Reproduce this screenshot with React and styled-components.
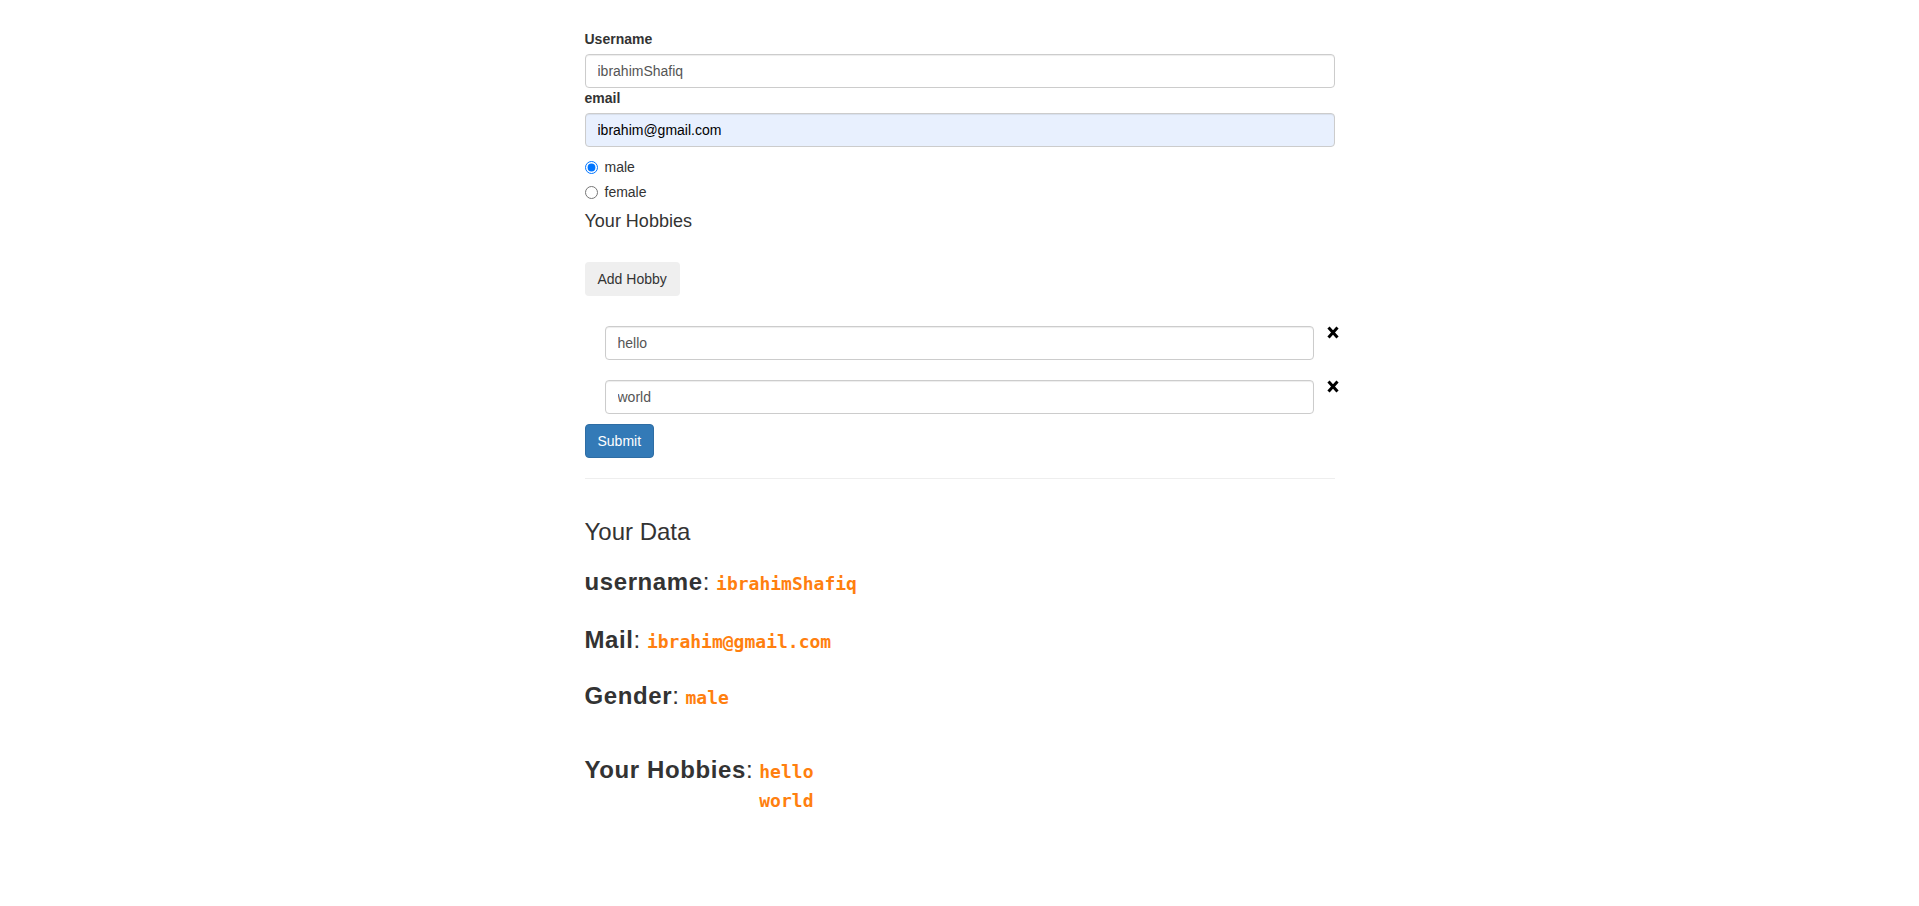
import React, { useState } from 'react';
import styled, { createGlobalStyle } from 'styled-components';

const textColor = '#333';
const borderColor = '#ccc';
const codeColor = '#ff7f0f';

const GlobalStyle = createGlobalStyle`
  * { box-sizing: border-box; }
  body {
    margin: 0;
    background: #fff;
    font-family: "Liberation Sans", Arial, Helvetica, sans-serif;
    font-size: 14px;
    line-height: 1.42857;
    color: ${textColor};
  }
`

const Page = styled.div`
  width: 1170px;
  margin: 0 auto;
  padding: 29px 0 40px;
`

const Column = styled.div`
  width: 750px;
  margin: 0 auto;
`

const Label = styled.label`
  display: block;
  font-weight: 700;
  line-height: 20px;
  margin-bottom: 5px;
`

const Input = styled.input`
  display: block;
  width: 100%;
  min-width: 0;
  height: 34px;
  padding: 6px 12px;
  font-family: inherit;
  font-size: 14px;
  line-height: 20px;
  color: ${props => (props.$autofill ? '#000' : '#555')};
  background: ${props => (props.$autofill ? '#e8f0fe' : '#fff')};
  border: 1px solid ${borderColor};
  border-radius: 4px;
  box-shadow: inset 0 1px 1px rgba(0, 0, 0, 0.075);
  outline: none;
`

const RadioLabel = styled.label`
  display: flex;
  align-items: center;
  line-height: 20px;
  margin: 10px 0;

  & + & { margin-top: -5px; }

  input {
    width: 13px;
    height: 13px;
    margin: 0 7px 0 0;
  }
`

const SubTitle = styled.h4`
  font-size: 18px;
  font-weight: 400;
  line-height: 1.1;
  margin: 10px 0 30px;
`

const Button = styled.button`
  display: inline-block;
  padding: 6px 12px;
  font-family: inherit;
  font-size: 14px;
  line-height: 20px;
  border: 1px solid ${props => (props.$primary ? '#2e6da4' : 'transparent')};
  border-radius: 4px;
  background: ${props => (props.$primary ? '#337ab7' : '#efefef')};
  color: ${props => (props.$primary ? '#fff' : textColor)};
  cursor: pointer;
`

const HobbyList = styled.div`
  display: flex;
  flex-direction: column;
  gap: 20px;
  margin: 30px 0 10px;
`

const HobbyRow = styled.div`
  display: flex;
  align-items: flex-start;
  padding-left: 20px;
`

const RemoveIcon = styled.span`
  flex: 0 0 21px;
  width: 21px;
  min-width: 0;
  padding-left: 13px;
  cursor: pointer;

  svg { display: block; overflow: visible; }
`

const Divider = styled.hr`
  margin: 20px 0;
  border: 0;
  border-top: 1px solid #eee;
`

const DataTitle = styled.h3`
  font-size: 24px;
  font-weight: 400;
  line-height: 26.4px;
  margin: 40px 0 0;
`

const DataRow = styled.h3`
  font-size: 24px;
  font-weight: 400;
  line-height: 26.4px;
  margin: ${props => props.$gap}px 0 0;

  b {
    font-weight: 700;
    letter-spacing: 0.6px;
  }
`

const Code = styled.code`
  font-family: "DejaVu Sans Mono", "Liberation Mono", monospace;
  font-size: 18px;
  font-weight: 700;
  color: ${codeColor};
`

const CodeStack = styled.span`
  display: inline-flex;
  flex-direction: column;
  vertical-align: baseline;

  code { line-height: 29px; }
`

function Cross() {
  return (
    <svg width="12" height="13" viewBox="0 0 12 13">
      <path d="M1.5 1.5 L10.5 11.5 M10.5 1.5 L1.5 11.5" stroke="#000" strokeWidth="3" fill="none" />
    </svg>
  );
}

export default function App() {
  const [hobbies] = useState(['hello', 'world']);

  return (
    <Page>
      <GlobalStyle />
      <Column>
        <Label>Username</Label>
        <Input defaultValue="ibrahimShafiq" />
        <Label>email</Label>
        <Input $autofill defaultValue="ibrahim@gmail.com" />

        <RadioLabel><input type="radio" name="gender" defaultChecked />male</RadioLabel>
        <RadioLabel><input type="radio" name="gender" />female</RadioLabel>

        <SubTitle>Your Hobbies</SubTitle>
        <Button type="button">Add Hobby</Button>

        <HobbyList>
          {hobbies.map(h => (
            <HobbyRow key={h}>
              <Input defaultValue={h} />
              <RemoveIcon><Cross /></RemoveIcon>
            </HobbyRow>
          ))}
        </HobbyList>

        <Button $primary type="submit">Submit</Button>
        <Divider />

        <DataTitle>Your Data</DataTitle>
        <DataRow $gap={24}><b>username</b>: <Code>ibrahimShafiq</Code></DataRow>
        <DataRow $gap={29}><b>Mail</b>: <Code>ibrahim@gmail.com</Code></DataRow>
        <DataRow $gap={28}><b>Gender</b>: <Code>male</Code></DataRow>
        <DataRow $gap={46}>
          <b>Your Hobbies</b>:{' '}
          <CodeStack>
            {hobbies.map(h => <Code key={h}>{h}</Code>)}
          </CodeStack>
        </DataRow>
      </Column>
    </Page>
  );
}
